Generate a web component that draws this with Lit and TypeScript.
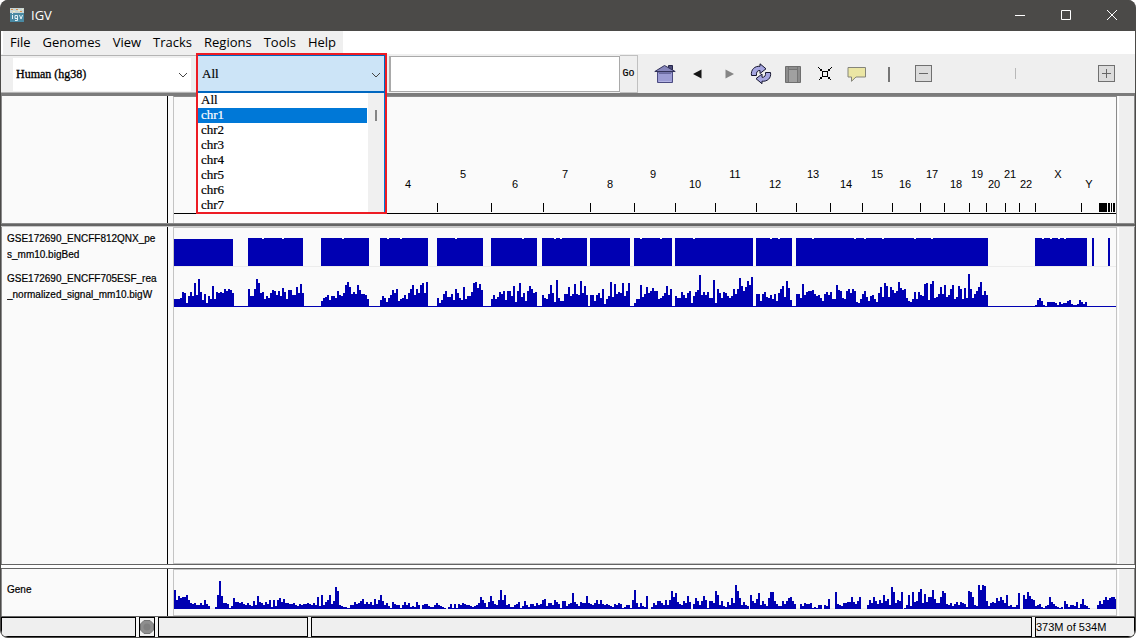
import { LitElement, html, css, svg } from "lit";
import { customElement, property, state } from "lit/decorators.js";

const SPAN = 942;

interface Run {
  x: number;
  heights: number[];
}

const run = (x: number, list: string): Run => ({
  x,
  heights: list.split(" ").map(Number),
});

const SIGNAL: Run[] = [
  run(0, "8 8 8 9 15 14 4 11 15 11 24 12 28 15 7 13 4 11 8 21 8 15 14 15 14 18 16 18 17 14"),
  run(74, "18 11 11 18 28 24 14 15 8 11 9 14 17 16 12 16 11 19 15 8 17 17 12 12 20 14 23 14"),
  run(147, "6 9 10 12 7 11 11 9 16 12 11 14 22 25 20 13 15 13 22 17 13 13 12 8"),
  run(206, "7 11 9 5 9 12 17 14 18 6 8 9 12 8 14 18 22 12 18 14 22 24 14 25"),
  run(263, "9 4 7 13 16 10 10 13 7 18 14 9 7 20 8 11 11 15 24 25 19 23 17"),
  run(317, "8 12 8 10 15 13 16 7 16 16 11 21 5 16 24 10 14 6 16 21 18 14 15"),
  run(368, "12 9 8 13 22 14 5 27 9 6 6 13 13 20 11 13 23 13 12 26 14 21 12"),
  run(416, "12 12 6 12 14 9 18 3 8 11 25 10 23 13 15 14 24 11 16 24"),
  run(460, "4 8 8 22 10 13 20 14 16 19 16 16 8 9 11 14 21 12 18"),
  run(501, "11 9 9 15 12 9 14 16 4 11 15 17 32 12 15 12 15 9 9 27 4 18 14 9 15 14 11 9 11 18 13 18 29 21 16 20 26 22 30"),
  run(582, "13 13 6 13 15 10 9 12 8 13 6 14 18 21 10 26 19 7"),
  run(
    622,
    "13 13 9 23 12 15 16 16 17 13 11 12 9 6 13 15 12 15 8 8 22 17 16 9 8 16 18 14 18 16 5 4 8 13 16 10 6 11 12 8 5 14 20 10 24 21 10 20 17 14 16 25 19 17 18 9 6 5 8 15 8 15 12 11 23 24 7 23 26 9 10 13 20 13 22 10 12 18 22 8 10 21 18 8 19 9 33 18 9 13 16 20 25 12 16 12"
  ),
  run(861, "2 7 9 6 2 1 5 5 5 5 4 2 5 3 4 4 6 7 3 2 2 3 7 5 3 5"),
];

const GENES: Run[] = [
  run(0, "19 9 13 11 12 12 14 9 6 5 6 4 4 6 4 9 5 3"),
  run(41, "2 14 28 13 6 6 5 1 3 11 7 7 6 7 5 4 6 4 3 8 4 13 7 6 4 7 5 9 2 9 3 9 11 7 10 6 6 5 5 6 4 3 5 4 5 5 6 5 4 6 4 12 3 14 4 7 9 14 5"),
  run(159, "8 22 18 4 3 2 2"),
  run(172, "1 1 4 4 7 5 6 8 10 5 7 5 7 4"),
  run(200, "10 5 9 14 8 4 6 3 1 7 5 4 4 1 4 7 4 6 2 3 2 7 4 0 4 5 5 3 2 2 4 6 4 3 2 1 0 2 5 1 5 1 5 4 6 5 4 4 3 2 3 4 6 12 9 6"),
  run(312, "2 7 13 8 5 4 9 19 9 14 4 5 2 2 4 5 7 1 3 8 4 2 5 5 3 6 4 5 9 10 3 6 6 4 9 7 5 1 8 8 3"),
  run(394, "5 6 16 7 5 3 7 6 6 13 6 5 4 6 9 5 9 5 4 5 4 3 2 5 4 6 5 1 2 4 4"),
  run(456, "1 9 19 6 2 6 3 2 13"),
  run(477, "2 6 4 8 8 6 4 9 4 9 18 12 16 7 5 4 8 6 13 7 0 5 11 8 4 8 13 9 1 8 8 6 18 14 4 8 3 2 7 4 11 6 24 18 11 4 7 4 3"),
  run(576, "14 8 6 10 16 4 8 5 3 11 17 17 8 5 3 3 8 5 8 11 12 8 5"),
  run(626, "5 3 6 5 5 6 1 2 1 4 4 0 4 3 10"),
  run(661, "17 5 4 3 6 6 7 7 12 7 5 8 12"),
  run(693, "4 9 6 12 8 5 9 6 14 8 10 4 22 17 6 9 8 17"),
  run(730, "1 4 14 3 17 7 8 17 20 6 15 7 12 12 19 10 6 6 12 18 16 5 4 6 3 5 7 4 7 6 5 2"),
  run(794, "18 17 12 4 3 24 19 24 23 8 3 6 7 6 11 8 12 9 6 14 3 4 2 2 4 16"),
  run(849, "14 10 17 13 10 9 3 4 5 2 1 3 4 12 7 5 3 2 1 2"),
  run(890, "8 5 2 4 4 3 7 1 5 10 4 3 1"),
  run(923, "4 8 5 9 12 9 11 12 12 10"),
];

const PEAKS: [number, number][] = [
  [0, 59], [74, 55], [147, 48], [206, 48], [263, 46], [317, 46], [368, 45],
  [416, 40], [460, 38], [501, 78], [582, 36], [622, 192], [861, 52], [918, 2], [934, 2],
];

const NOTCHES = [10, 30, 50, 88, 108, 168, 213, 226, 281, 348, 380, 386, 466, 486, 519, 596, 604, 638, 680, 690, 708, 740, 757, 868, 876, 884, 890];

const LABELS: [string, number][] = [
  ["4", 234], ["5", 289], ["6", 341], ["7", 391], ["8", 436], ["9", 479], ["10", 521],
  ["11", 561], ["12", 601], ["13", 639], ["14", 672], ["15", 703], ["16", 731],
  ["17", 758], ["18", 782], ["19", 803], ["20", 820], ["21", 836], ["22", 852],
  ["X", 884], ["Y", 915],
];

const TICKS: [number, number][] = [
  [263, 1], [317, 1], [369, 1], [416, 1], [460, 1], [501, 1], [541, 1], [582, 1],
  [622, 1], [656, 1], [688, 1], [718, 1], [746, 1], [770, 1], [795, 1], [812, 1],
  [831, 1], [845, 1], [861, 1], [907, 1], [925, 8], [934, 2], [937, 1], [939, 1], [940, 1],
];

const barPath = (runs: Run[], base: number) =>
  runs
    .flatMap((r) =>
      r.heights.map((h, i) => `M${r.x + i * 2} ${base}v${-h}h2v${h}z`)
    )
    .join("");

@customElement("igv-menu")
class IgvMenu extends LitElement {
  static styles = css`
    :host { display: flex; background: #fff; height: 23px; }
    nav { display: flex; background: #efefef; margin-left: 2px; padding: 0 1px; }
    button {
      border: 0; background: none; padding: 0 6px 1px; color: #000;
      font: 13px/22px "Open Sans", "Noto Sans", sans-serif;
    }
  `;
  render() {
    const items = ["File", "Genomes", "View", "Tracks", "Regions", "Tools", "Help"];
    return html`<nav aria-label="Main menu">${items.map((t) => html`<button>${t}</button>`)}</nav>`;
  }
}

@customElement("igv-chromosome-picker")
class IgvChromosomePicker extends LitElement {
  @state() private active = "chr1";
  private names = ["All", "chr1", "chr2", "chr3", "chr4", "chr5", "chr6", "chr7"];

  static styles = css`
    :host { display: block; position: relative; width: 191px; font: 13px/15px "Liberation Serif", serif; }
    .field { height: 100%; box-sizing: border-box; padding: 1px 2px 0; }
    select {
      appearance: none; width: 100%; height: 100%; box-sizing: border-box;
      border: 1px solid #0067c0; border-bottom-width: 2px; border-left-width: 0;
      border-radius: 0; background: #cce4f7; color: #000; padding: 0 4px; font: inherit; outline: none;
      -webkit-text-stroke: 0.2px;
    }
    .arrow { position: absolute; right: 6px; top: 18px; pointer-events: none; }
    .frame {
      position: absolute; inset: -1px 0 auto 0; height: 161px; box-sizing: border-box;
      border: 2px solid #ed1c24; z-index: 3; pointer-events: none;
    }
    .popup {
      position: absolute; top: 39px; left: 2px; right: 2px; height: 119px; z-index: 2;
      display: flex; background: #fff; border-right: 1px solid #0078d7; overflow: hidden;
    }
    ul { list-style: none; margin: 0; padding: 0; flex: 1; line-height: 13px; -webkit-text-stroke: 0.2px; }
    li { padding: 0 3px; height: 15px; }
    li.on { background: #0078d7; color: #fff; margin-right: 1px; }
    .gutter { width: 16px; background: #f0f0f0; padding-top: 17px; }
    .thumb { width: 2px; height: 11px; margin: 0 auto; background: #858585; }
  `;
  render() {
    return html`
      <div class="field">
        <select aria-label="Chromosome"><option>All</option></select>
      </div>
      <svg class="arrow" width="10" height="6" viewBox="0 0 10 6"><path d="M1 1l4 4 4-4" fill="none" stroke="#444" /></svg>
      <div class="popup">
        <ul role="listbox" aria-label="Chromosomes">
          ${this.names.map((n) => html`
            <li role="option" class=${n === this.active ? "on" : ""}
              aria-selected=${n === this.active}
              @mouseenter=${() => (this.active = n)}>${n}</li>`)}
        </ul>
        <div class="gutter"><div class="thumb"></div></div>
      </div>
      <div class="frame"></div>
    `;
  }
}

@customElement("igv-toolbar")
class IgvToolbar extends LitElement {
  static styles = css`
    :host { display: flex; height: 39px; background: #efefef; border-bottom: 3px solid #7b7b7b; }
    .genome {
      position: relative; width: 195px; box-sizing: border-box; padding: 2px 5px 1px 12px;
      border: solid #b4b4b4; border-width: 1px 0; margin-top: 1px;
    }
    .genome select {
      appearance: none; width: 100%; height: 100%; border: 0; border-radius: 0; background: #fff;
      padding: 0 3px; color: #000; font: 12px/15px "Liberation Serif", serif; -webkit-text-stroke: 0.3px;
    }
    .genome svg { position: absolute; right: 8px; top: 16px; pointer-events: none; }
    .search { display: flex; width: 251px; padding: 1px 0 0 2px; box-sizing: border-box; }
    .search input {
      flex: 1; min-width: 0; border: 1px solid #a9a9a9; border-left-width: 2px;
      margin: 1px 0; padding: 0 4px; background: #fff; outline: none;
    }
    .search button {
      width: 18px; border: 1px solid #c0c0c0; border-left: 0; background: #efefef;
      padding: 0; color: #000; font: 10px/12px "Liberation Mono", monospace; -webkit-text-stroke: 0.2px;
    }
    .tools { display: flex; margin-left: 11px; padding-top: 1px; }
    .tools button, .tools .sep {
      width: 32px; border: 0; background: none; padding: 0;
      display: flex; align-items: center; justify-content: center;
    }
    .bar { width: 2px; height: 15px; background: #757575; }
    .zoom { flex: 1; display: flex; align-items: center; padding: 0 20px 0 10px; }
    .zoom button {
      width: 17px; height: 17px; flex: none; box-sizing: border-box; padding: 0;
      border: 1px solid #707070; background: #dcdcdc; display: flex; align-items: center; justify-content: center;
    }
    input[type="range"] { appearance: none; flex: 1; min-width: 0; margin: 0 8px; background: none; height: 17px; }
    input[type="range"]::-webkit-slider-thumb { appearance: none; width: 1px; height: 11px; background: #b8b8b8; }
  `;
  render() {
    return html`
      <div class="genome">
        <select aria-label="Genome"><option>Human (hg38)</option></select>
        <svg width="10" height="6" viewBox="0 0 10 6"><path d="M1 1l4 4 4-4" fill="none" stroke="#444" /></svg>
      </div>
      <igv-chromosome-picker></igv-chromosome-picker>
      <div class="search">
        <input type="text" aria-label="Locus" />
        <button>Go</button>
      </div>
      <div class="tools">
        <button aria-label="Home">
          <svg width="22" height="20" viewBox="0 0 22 20">
            <path d="M14.500 1.500h4v5h-4z" fill="#4c4c78" stroke="#26264a" />
            <path d="M3.500 8h15v10.500h-15z" fill="#9c9cd4" stroke="#4a4a80" />
            <path d="M.8 7.500L10.500 1.500l10.700 6z" fill="#8686bc" stroke="#33335a" />
            <path d="M5 9.500h12" stroke="#6a6aa0" />
            <path d="M5 17.500h12" stroke="#b4b4e4" />
          </svg>
        </button>
        <button aria-label="Back">
          <svg width="9" height="10" viewBox="0 0 9 10"><path d="M0 5L8.500 .5v9z" fill="#151515" /></svg>
        </button>
        <button aria-label="Forward">
          <svg width="9" height="10" viewBox="0 0 9 10"><path d="M9 5L.5 .5v9z" fill="#858585" /></svg>
        </button>
        <button aria-label="Refresh">
          <svg width="22" height="22" viewBox="0 0 22 22" fill="#a6a6e0" stroke="#15152e" stroke-width="1">
            <path d="M1.500 12.500C.5 6.500 5 2.800 10 3.300V.8l6 5-6 4.700V7.500C7.500 7.300 6 9 6.500 12.500z" />
            <path d="M20.500 9.500c1 6-3.500 9.200-8.500 8.700v2.500l-6-5 6-4.700v3.300c2.500.2 4-1.500 3.500-4.800z" />
          </svg>
        </button>
        <button aria-label="Region of interest">
          <svg width="16" height="17" viewBox="0 0 16 17">
            <path d="M.5 .5h15v16H.5z" fill="#8c8c8c" stroke="#6e6e6e" />
            <path d="M3.500 1v15M12.500 1v15M3.500 3.500h9" stroke="#747474" fill="none" />
            <path d="M4 4h8v12H4z" fill="#a0a0a0" />
          </svg>
        </button>
        <button aria-label="Fit to window">
          <svg width="14" height="14" viewBox="0 0 14 14" fill="none" stroke="#000" shape-rendering="crispEdges">
            <path d="M4.500 4.500h5v5h-5z" />
            <path d="M.5 .5l3 3M13.500 .5l-3 3M.5 13.500l3-3M13.500 13.500l-3-3M2 3.500h2M3.500 2v2M10 3.500h2M10.500 2v2M2 10.500h2M3.500 10v2M10 10.500h2M10.500 10v2" />
          </svg>
        </button>
        <button aria-label="Popup text">
          <svg width="20" height="16" viewBox="0 0 20 16">
            <path d="M1 1.500h17.500v9.500H9l-4.500 4.300V11H1z" fill="#ebe6a4" stroke="#85857a" />
          </svg>
        </button>
        <div class="sep"><div class="bar"></div></div>
      </div>
      <div class="zoom">
        <button aria-label="Zoom out"><svg width="9" height="9" viewBox="0 0 9 9"><path d="M0 4.500h9" stroke="#666" /></svg></button>
        <input type="range" aria-label="Zoom" min="0" max="100" value="50" />
        <button aria-label="Zoom in"><svg width="9" height="9" viewBox="0 0 9 9"><path d="M0 4.500h9M4.500 0v9" stroke="#666" /></svg></button>
      </div>
    `;
  }
}

@customElement("igv-panel")
class IgvPanel extends LitElement {
  @property() kind = "header";

  static styles = css`
    :host { display: grid; grid-template-columns: 167px minmax(0, 1fr) 18px; background: #fafafa; min-height: 0; }
    .names {
      border-left: 1px solid #8a8a8a; border-right: 1px solid #000; padding: 0 5px;
      font: 10px/16px "Liberation Sans", Arial, sans-serif; color: #000; overflow: hidden;
      -webkit-text-stroke: 0.2px;
    }
    .names p { margin: 0; height: 40px; overflow: hidden; white-space: nowrap; }
    .tracks { padding-top: 4px; }
    .gene { padding-top: 13px; }
    .canvas { margin-left: 5px; border: 1px solid #c4c4c4; min-width: 0; overflow: hidden; }
    .canvas.top { border-color: #8a8a8a #8a8a8a transparent #c4c4c4; border-bottom: 0; }
    .side { background: #efefef; border-left: 1px solid #fff; margin-left: 1px; border-right: 1px solid #8a8a8a; }
    .plot { display: block; width: 100%; }
    .ruler { height: 122px; font: 11px "Liberation Sans", Arial, sans-serif; }
    .wide { height: 82px; }
    .low { height: 40px; }
  `;

  private ruler() {
    const pc = (v: number) => `${(v / SPAN) * 100}%`;
    return html`<svg class="plot ruler" shape-rendering="crispEdges">
      ${LABELS.map(([t, x], i) => svg`<text x=${pc(x)} y=${i % 2 ? 81 : 91} text-anchor="middle">${t}</text>`)}
      ${TICKS.map(([x, w]) => svg`<rect x=${pc(x)} y="106" width=${w} height="9"></rect>`)}
      <rect x="0" y="116" width="100%" height="1"></rect>
    </svg>`;
  }

  private data() {
    return html`<svg class="plot wide" viewBox="0 0 942 82" preserveAspectRatio="none" shape-rendering="crispEdges">
      <rect y="38" width="942" height="1" fill="#ececec" />
      ${PEAKS.map(([x, w]) => svg`<rect x=${x} y="10" width=${w} height="28" fill="#0000b2"></rect>`)}
      <rect x="0" y="10" width="59" height="1" fill="#fafafa" />
      ${NOTCHES.map((x) => svg`<rect x=${x} y="10" width="2" height="1" fill="#fafafa"></rect>`)}
      <rect y="78" width="942" height="1" fill="#0000b2" />
      <path d=${barPath(SIGNAL, 79)} fill="#0000b2" />
    </svg>`;
  }

  private genes() {
    return html`<svg class="plot low" viewBox="0 0 942 40" preserveAspectRatio="none" shape-rendering="crispEdges">
      <rect y="38" width="942" height="1" fill="#ececec" />
      <path d=${barPath(GENES, 39)} fill="#0000b2" />
    </svg>`;
  }

  render() {
    if (this.kind === "header") {
      return html`<div class="names"></div><div class="canvas top">${this.ruler()}</div><div class="side"></div>`;
    }
    if (this.kind === "tracks") {
      return html`
        <div class="names tracks">
          <p>GSE172690_ENCFF812QNX_pe<br />s_mm10.bigBed</p>
          <p>GSE172690_ENCFF705ESF_rea<br />_normalized_signal_mm10.bigW</p>
        </div>
        <div class="canvas">${this.data()}</div><div class="side"></div>`;
    }
    return html`<div class="names gene"><p>Gene</p></div><div class="canvas">${this.genes()}</div><div class="side"></div>`;
  }
}

@customElement("app-root")
class AppRoot extends LitElement {
  static styles = css`
    :host { display: block; height: 100vh; background: #fff; }
    .window {
      display: flex; flex-direction: column; height: 100%; box-sizing: border-box;
      border: solid #4b4a48; border-width: 0 1px 1px; border-radius: 8px; overflow: hidden; background: #4b4a48;
    }
    .title {
      display: flex; align-items: center; height: 31px; box-sizing: border-box; flex: none; background: #4b4a48; color: #fff;
      font: 13px/18px "Open Sans", "Noto Sans", sans-serif; padding: 0 0 1px 9px;
    }
    .caption { flex: 1; padding-left: 7px; }
    .title button { width: 46px; height: 30px; border: 0; padding: 0; background: none; display: grid; place-items: center; }
    igv-menu, igv-toolbar { flex: none; }
    .header { flex: none; height: 127px; }
    .split { flex: none; height: 4px; box-sizing: border-box; background: #646464; border-top: 1px solid #8a8a8a; border-bottom: 1px solid #c8c8c8; }
    .main { flex: 1; }
    .gap { flex: none; height: 3px; border: solid #646464; border-width: 1px 0; background: #fff; }
    .features { flex: none; height: 47px; }
    footer {
      flex: none; display: flex; gap: 3px; height: 21px; box-sizing: border-box; background: #f6f6f6;
      border-top: 1px solid #646464; font: 11px/18px "Liberation Sans", Arial, sans-serif; color: #000;
    }
    footer div { border: 1px solid #000; background: #efefef; box-sizing: border-box; }
    .msg { width: 135px; }
    .stop { width: 16px; display: grid; place-items: center; overflow: hidden; }
    .pos { width: 150px; }
    .info { flex: 1; }
    .mem { width: 100px; white-space: nowrap; }
  `;
  render() {
    return html`
      <div class="window">
        <header class="title">
          <svg width="14" height="14" viewBox="0 0 14 14">
            <rect width="14" height="14" fill="#4a8aa3" />
            <rect width="14" height="5" fill="#c9d6d4" />
            <path d="M1 1.500h2M6 1.500h2M10 3.500h2" stroke="#d8904e" />
            <path d="M3 3.500h2M8 2.500h2M12 1.500h1" stroke="#f4efc0" />
            <path d="M2.500 5v1M2.500 7v4M5 7.500h2.500v5H5M5 7.500v3h2.500M9.500 7l1.500 4 1.500-4" fill="none" stroke="#e4f2f6" />
          </svg>
          <span class="caption">IGV</span>
          <button aria-label="Minimize"><svg width="10" height="10"><path d="M0 5.500h10" stroke="#fff" /></svg></button>
          <button aria-label="Maximize"><svg width="10" height="10"><path d="M.5 .5h9v9h-9z" fill="none" stroke="#fff" /></svg></button>
          <button aria-label="Close"><svg width="10" height="10"><path d="M0 0l10 10M10 0L0 10" stroke="#fff" /></svg></button>
        </header>
        <igv-menu></igv-menu>
        <igv-toolbar></igv-toolbar>
        <igv-panel class="header" kind="header"></igv-panel>
        <div class="split"></div>
        <igv-panel class="main" kind="tracks"></igv-panel>
        <div class="gap"></div>
        <igv-panel class="features" kind="genes"></igv-panel>
        <footer>
          <div class="msg"></div>
          <div class="stop"><svg width="14" height="14" viewBox="0 0 14 14"><path d="M4 .5h6L13.500 4v6L10 13.500H4L.5 10V4z" fill="#8e8e8e" stroke="#757575" /><circle cx="7" cy="7" r="3.500" fill="#808080" /></svg></div>
          <div class="pos"></div>
          <div class="info"></div>
          <div class="mem">373M of 534M</div>
        </footer>
      </div>
    `;
  }
}
